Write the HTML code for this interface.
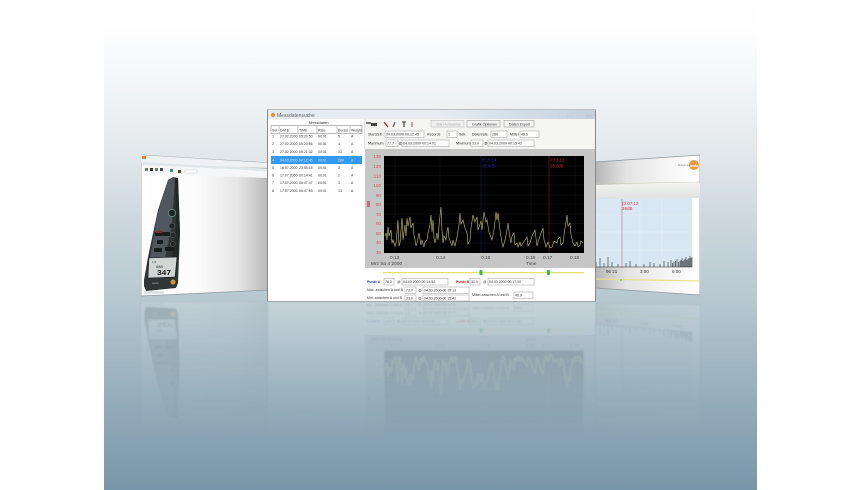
<!DOCTYPE html>
<html><head><meta charset="utf-8"><title>Messdatensuche</title>
<style>html,body{margin:0;padding:0;background:#fff;width:860px;height:490px;overflow:hidden}svg{display:block}text{font-family:"Liberation Sans",sans-serif}</style></head>
<body>
<svg width="860" height="490" viewBox="0 0 860 490" xmlns="http://www.w3.org/2000/svg">
<defs>
<linearGradient id="bg" x1="0" y1="0" x2="0" y2="1">
<stop offset="0" stop-color="#fff"/><stop offset=".07" stop-color="#fdfdfe"/><stop offset=".2" stop-color="#f0f3f5"/><stop offset=".33" stop-color="#e0e6e9"/><stop offset=".45" stop-color="#ccd8de"/><stop offset=".6" stop-color="#b8c9d1"/><stop offset=".75" stop-color="#9fb5c1"/><stop offset="1" stop-color="#7896a9"/>
</linearGradient>
<linearGradient id="lw" x1="141" x2="270" y1="0" y2="0" gradientUnits="userSpaceOnUse"><stop offset="0" stop-color="#fff"/><stop offset=".45" stop-color="#fbfbfb"/><stop offset=".75" stop-color="#e6e6e6"/><stop offset="1" stop-color="#b5b5b5"/></linearGradient>
<linearGradient id="rw" x1="595" x2="700" y1="0" y2="0" gradientUnits="userSpaceOnUse"><stop offset="0" stop-color="#b5b5b5"/><stop offset=".3" stop-color="#e4e4e4"/><stop offset=".7" stop-color="#f6f6f6"/><stop offset="1" stop-color="#fff"/></linearGradient>
<linearGradient id="rband" x1="0" x2="0" y1="0" y2="1"><stop offset="0" stop-color="#f2f2f0"/><stop offset="1" stop-color="#dfe2e2"/></linearGradient>
<linearGradient id="tb" x1="0" x2="1" y1="0" y2="0"><stop offset="0" stop-color="#e4ebf1"/><stop offset=".5" stop-color="#e8edf2"/><stop offset="1" stop-color="#c3d1dd"/></linearGradient>
<linearGradient id="fade" x1="0" x2="0" y1="296" y2="440" gradientUnits="userSpaceOnUse"><stop offset="0" stop-color="#fff" stop-opacity=".24"/><stop offset=".37" stop-color="#fff" stop-opacity=".12"/><stop offset=".65" stop-color="#fff" stop-opacity=".05"/><stop offset="1" stop-color="#fff" stop-opacity="0"/></linearGradient>
<mask id="rm" maskUnits="userSpaceOnUse" x="0" y="290" width="860" height="200"><rect x="0" y="290" width="860" height="200" fill="url(#fade)"/></mask>
<filter id="soft" x="0" y="0" width="100%" height="100%"><feGaussianBlur stdDeviation=".38"/></filter>
<filter id="soft2" x="-5%" y="-5%" width="110%" height="110%"><feGaussianBlur stdDeviation=".8"/></filter>

<g id="left">
<polygon points="141,155 270,163 270,290 141,296" fill="url(#lw)" stroke="#8d979c" stroke-width=".8"/>
<polygon points="141,155 270,163 270,168 141,162" fill="#eef2f5"/>
<rect x="142" y="156" width="4" height="3" fill="#d98b3a"/>
<polygon points="143,162 270,169 270,171 143,165" fill="#dfe6ea"/>
<polygon points="143,165 270,171 270,178 143,174" fill="#f4f6f7"/>
<g fill="#6d7b70"><rect x="145" y="168" width="3" height="3"/><rect x="150" y="168" width="3" height="3" fill="#333"/><rect x="155" y="168" width="3" height="3"/><rect x="160" y="168" width="3" height="3" fill="#445"/><rect x="170" y="169" width="3" height="3" fill="#3a8a7a"/><rect x="178" y="170" width="3" height="3" fill="#643"/><rect x="185" y="170" width="12" height="3" fill="#fff" stroke="#aaa" stroke-width=".3"/></g>
<polygon points="168,180 173,177 178,178 180,233 178,283 176,288 146,291 144,286 144,280 148,257 158,210" fill="#2f3436"/>
<polygon points="168,180 173,177 175,178 172,225 165,258 150,258 158,212" fill="#50575b"/>
<polygon points="175,179 178,178 180,233 178,258 172,258 176,225" fill="#232628"/>
<g fill="#191b1c"><rect x="155" y="232" width="8" height="4" rx="1"/><rect x="163" y="232" width="7" height="4" rx="1"/><rect x="157" y="240" width="6" height="4" rx="1"/><rect x="154" y="248" width="8" height="4" rx="1"/><rect x="165" y="247" width="9" height="4" rx="1"/></g>
<circle cx="172" cy="213" r="3.6" fill="#1d2224" stroke="#5f8a80" stroke-width="1"/>
<circle cx="172" cy="226" r="3" fill="#20262a" stroke="#777" stroke-width=".4"/>
<circle cx="173" cy="235" r="2.6" fill="#20262a" stroke="#777" stroke-width=".4"/>
<circle cx="173" cy="244" r="2.5" fill="#20262a" stroke="#777" stroke-width=".4"/>
<rect x="156" y="231" width="6" height="2" fill="#7a3037"/>
<polygon points="149,258 177,257 175,277 148,278" fill="#d0d6d4" stroke="#111" stroke-width=".5"/>
<text x="152" y="263" font-size="3" fill="#222">1.0</text><text x="156" y="268" font-size="4" fill="#222">088</text>
<text x="157" y="275" font-size="7.500" font-weight="bold" fill="#1a1a1a" textLength="14" lengthAdjust="spacingAndGlyphs">347</text>
<circle cx="173" cy="282" r="2.6" fill="#c9913c"/>
<text x="152" y="284" font-size="3" fill="#bbb">testo</text>
<rect x="144" y="291" width="20" height="3" fill="#dde3e6"/>
</g>

<g id="right">
<polygon points="595,162 700,155 700,295 595,288" fill="url(#rw)" stroke="#8d979c" stroke-width=".7"/>
<polygon points="595,185 700,183 700,198 595,199" fill="url(#rband)"/>
<path d="M595 184L700 182" stroke="#c8c8b8" stroke-width=".5"/>
<polygon points="595,199 692,198 692,267 595,267" fill="#d8e7f1"/>
<g stroke="#e7f0f6" stroke-width=".5"><path d="M595 215H692M595 232H692M595 250H692M640 198V267M662 198V267"/></g>
<path d="M622 199V268" stroke="#b07a85" stroke-width=".6"/>
<text x="622" y="205" font-size="4.5" fill="#d1394f">(0:07:13</text><text x="622" y="210" font-size="4.5" fill="#d1394f">26dB</text>
<path d="M596 267V262M600 267V258M604 267V263M608 267V257M612 267V262M618 267V264M626 267V263M630 267V261M636 267V264M644 267V264M650 267V262M654 267V263M660 267V264M664 267V261M668 267V262M671 267V260M672.500 267V263M674 267V262M675.500 267V261M677 267V259M678.500 267V262M680 267V261M681 267V260M682 267V258M683 267V261M684 267V260M685 267V259M686 267V257M687 267V260M688 267V259M689 267V258M690 267V256M691 267V258M692 267V257" stroke="#000" stroke-width=".5"/>
<path d="M595 267H692" stroke="#222" stroke-width=".6"/>
<text x="606" y="273" font-size="4.5" fill="#333">96 21</text><text x="640" y="273" font-size="4.5" fill="#333">3:00</text><text x="672" y="273" font-size="4.5" fill="#333">6:00</text>
<path d="M595 279L700 281" stroke="#e3e38e" stroke-width="1.2"/>
<circle cx="621" cy="280" r="1.1" fill="#8ec27f"/>
<circle cx="694" cy="165" r="5" fill="#ee9a3a"/>
<text x="690" y="167" font-size="3.5" font-weight="bold" fill="#fff">testo</text>
<text x="678" y="166" font-size="2.8" fill="#777">Dokument</text>
</g>

<g id="main">
<rect x="267.5" y="109.5" width="328" height="192" fill="#fff" stroke="#8b8b8b" stroke-width="1"/>
<rect x="268" y="110" width="327" height="9" fill="url(#tb)"/>
<circle cx="273" cy="115" r="2.2" fill="#e0963a"/>
<text x="277" y="117" font-size="5" fill="#666">Messdatensuche</text>
<rect x="567" y="114" width="8" height="4" fill="#c9d2da"/><rect x="576" y="114" width="8" height="4" fill="#c9d2da"/><rect x="585" y="114" width="8" height="4" fill="#c4cdd6"/>
<rect x="268" y="119" width="327" height="30" fill="#f5f5f4"/>
<rect x="268" y="119" width="96" height="182" fill="#fff"/>
<text x="309" y="124" font-size="4" fill="#333">Messdaten</text>
<rect x="271" y="125.500" width="91" height="8" fill="#fff" stroke="#777" stroke-width=".5"/>
<path d="M279 126V133M298 126V133M317 126V133M337 126V133M350 126V133" stroke="#888" stroke-width=".5"/>
<g font-size="3.500" fill="#333">
<text x="272" y="131.500">Set</text><text x="280" y="131.500">DATE</text><text x="299" y="131.500">TIME</text><text x="318" y="131.500">Rate</text><text x="338" y="131.500">Bursts</text><text x="351" y="131.500">Weight</text>
<text x="272" y="137.500">1</text><text x="280" y="137.500">27.02.2000</text><text x="299" y="137.500">05:20:50</text><text x="318" y="137.500">00:01</text><text x="338" y="137.500">5</text><text x="351" y="137.500">A</text>
<text x="272" y="145">2</text><text x="280" y="145">27.02.2000</text><text x="299" y="145">05:20:56</text><text x="318" y="145">00:01</text><text x="338" y="145">4</text><text x="351" y="145">A</text>
<text x="272" y="153">3</text><text x="280" y="153">27.02.2000</text><text x="299" y="153">05:21:32</text><text x="318" y="153">00:01</text><text x="338" y="153">13</text><text x="351" y="153">A</text>
</g>
<rect x="271" y="156" width="91" height="8" fill="#3399ee"/>
<g font-size="3.500" fill="#dff0ff"><text x="272" y="161.500">4</text><text x="280" y="161.500">04.03.2000</text><text x="299" y="161.500">00:12:45</text><text x="318" y="161.500">00:01</text><text x="338" y="161.500">280</text><text x="351" y="161.500">A</text></g>
<g font-size="3.500" fill="#333">
<text x="272" y="169">5</text><text x="280" y="169">16.07.2000</text><text x="299" y="169">23:55:16</text><text x="318" y="169">00:01</text><text x="338" y="169">3</text><text x="351" y="169">A</text>
<text x="272" y="176.500">6</text><text x="280" y="176.500">17.07.2000</text><text x="299" y="176.500">00:14:41</text><text x="318" y="176.500">00:01</text><text x="338" y="176.500">2</text><text x="351" y="176.500">A</text>
<text x="272" y="184">7</text><text x="280" y="184">17.07.2000</text><text x="299" y="184">06:47:47</text><text x="318" y="184">00:01</text><text x="338" y="184">3</text><text x="351" y="184">A</text>
<text x="272" y="192">8</text><text x="280" y="192">17.07.2000</text><text x="299" y="192">06:47:59</text><text x="318" y="192">00:01</text><text x="338" y="192">13</text><text x="351" y="192">A</text>
</g>
<path d="M364.500 119V149" stroke="#ccc" stroke-width=".5"/>
<rect x="366" y="122" width="5" height="2" fill="#777"/><rect x="371" y="123" width="6" height="3" fill="#444"/>
<path d="M384 122l4 5" stroke="#c22" stroke-width="1.4"/><path d="M393 127l2-5" stroke="#555" stroke-width="1.2"/><path d="M402 122h4M404 122v5" stroke="#333" stroke-width="1.1"/><path d="M412 122v5" stroke="#a66" stroke-width="1.1"/>
<g font-size="3.600" fill="#333">
<rect x="431" y="120.500" width="33" height="6.500" fill="#f0f0f0" stroke="#bbb" stroke-width=".6"/><text x="436" y="125.300" fill="#aaa">Start Aufnahme</text>
<rect x="467" y="120.500" width="33" height="6.500" fill="#f4f4f4" stroke="#999" stroke-width=".6"/><text x="472" y="125.300">Grafik Optionen</text>
<rect x="504" y="120.500" width="30" height="6.500" fill="#f4f4f4" stroke="#999" stroke-width=".6"/><text x="509" y="125.300">Daten Export</text>
<text x="368" y="135.500">StartZeit</text><rect x="385" y="131" width="39" height="6.500" fill="#fff" stroke="#999" stroke-width=".5"/><text x="386" y="135.600">04.03.2000 00:12:45</text>
<text x="427" y="135.500">Records</text><rect x="447" y="131" width="10" height="6.500" fill="#fff" stroke="#999" stroke-width=".5"/><text x="448" y="135.600">1</text>
<text x="459" y="135.500">Sek.</text><text x="472" y="135.500">Datenrate</text><rect x="491" y="131" width="16" height="6.500" fill="#fff" stroke="#999" stroke-width=".5"/><text x="492" y="135.600">280</text>
<text x="510" y="135.500">Mittel</text><rect x="520" y="131" width="19" height="6.500" fill="#fff" stroke="#999" stroke-width=".5"/><text x="521" y="135.600">46.9</text>
<text x="368" y="144.500">Maximum</text><rect x="386" y="140" width="12" height="6.500" fill="#fff" stroke="#999" stroke-width=".5"/><text x="387" y="144.600">77.7</text><text x="398.500" y="144.600">@</text><rect x="402" y="140" width="47" height="6.500" fill="#fff" stroke="#999" stroke-width=".5"/><text x="403" y="144.600">04.03.2000 00:14:01</text>
<text x="456" y="144.500">Minimum</text><rect x="471" y="140" width="12" height="6.500" fill="#fff" stroke="#999" stroke-width=".5"/><text x="472" y="144.600">33.0</text><text x="484" y="144.600">@</text><rect x="488" y="140" width="46" height="6.500" fill="#fff" stroke="#999" stroke-width=".5"/><text x="489" y="144.600">04.03.2000 00:15:42</text>
</g>
<rect x="365" y="149" width="230" height="119" fill="#c6c6c6"/>
<rect x="384" y="156" width="200" height="97" fill="#050505"/>
<g stroke="#1a1a1a" stroke-width=".5"><path d="M384 166H584M384 175.500H584M384 185H584M384 195H584M384 204H584M384 214H584M384 223.500H584M384 233H584M384 243H584M395 156V253M440 156V253M485 156V253M531 156V253M575 156V253"/></g>
<g font-size="4.600" fill="#c8565a" text-anchor="end">
<text x="381" y="158">130</text><text x="381" y="168">120</text><text x="381" y="177.500">110</text><text x="381" y="187">100</text><text x="381" y="197">90</text><text x="381" y="206">80</text><text x="381" y="216">70</text><text x="381" y="225">60</text><text x="381" y="235">50</text><text x="381" y="244">40</text><text x="381" y="254">30</text></g>
<rect x="367" y="201" width="3" height="6" fill="#d06a6a"/>
<path d="M481 156V253" stroke="#14147a" stroke-width=".6"/><path d="M549 156V253" stroke="#8a1515" stroke-width=".6"/>
<text x="482" y="161.500" font-size="4.300" fill="#22229a">0:15:14</text><text x="482" y="167.500" font-size="4.300" fill="#22229a">26.8dB</text>
<text x="550" y="161.500" font-size="4.300" fill="#c22">0:17:13</text><text x="550" y="167.500" font-size="4.300" fill="#c22">26.8dB</text>
<polyline fill="none" stroke="#c4c15a" stroke-width=".6" points="385,236 386,233 387,240 388,227 389,236 391,230 392,243 393,240 395,246 396,243 397,232 398,220 399,246 400,243 401,230 402,218 403,240 404,232 405,225 406,236 407,218 408,226 410,217 411,228 413,223 414,236 415,240 416,246 417,243 418,238 419,233 421,245 422,240 424,247 425,242 427,240 428,233 430,225 431,215 432,232 433,220 434,238 435,243 436,238 437,233 438,240 439,225 441,207 442,230 443,243 444,236 446,240 447,232 448,227 449,238 451,243 452,246 453,240 455,246 457,237 459,225 460,213 461,224 463,220 465,228 467,233 468,244 470,240 471,228 473,215 475,222 477,217 478,230 479,227 481,221 482,230 484,212 486,222 487,220 489,232 492,240 494,230 496,212 497,220 498,213 500,230 502,243 503,247 505,240 507,230 508,223 510,238 511,243 512,236 514,233 515,245 517,243 518,247 520,242 521,246 523,243 525,240 527,237 528,246 530,243 532,236 535,230 537,246 538,242 540,236 543,228 544,240 545,243 546,247 548,242 550,248 552,247 554,241 557,243 558,239 560,237 561,245 563,243 565,228 567,215 568,226 570,223 571,235 573,243 575,246 577,242 578,247 580,245 581,241 583,243"/>
<g font-size="4.800" fill="#444">
<text x="390" y="259">0.13</text><text x="436" y="259">0.14</text><text x="481" y="259">0.15</text><text x="526" y="259">0.16</text><text x="543" y="259">0.17</text><text x="570" y="259">0.18</text>
<text x="371" y="265">Mrz So 4 2000</text><text x="526" y="265">Time</text></g>
<path d="M383 272.700H584" stroke="#d8d83a" stroke-width="1"/>
<rect x="479.500" y="270" width="3" height="5" rx=".8" fill="#41b648"/><rect x="547" y="270" width="3" height="5" rx=".8" fill="#41b648"/>
<g font-size="3.500" fill="#333">
<text x="367" y="283" fill="#2a3aa8" font-weight="bold">Punkt A</text><rect x="384" y="278.500" width="10" height="6.500" fill="#fff" stroke="#999" stroke-width=".5"/><text x="385" y="283.200">76.3</text><text x="397" y="283.200">@</text><rect x="402" y="278.500" width="46" height="6.500" fill="#fff" stroke="#999" stroke-width=".5"/><text x="403" y="283.200">04.03.2000 00:14:54</text>
<text x="456" y="283" fill="#c22" font-weight="bold">Punkt B</text><rect x="470" y="278.500" width="10" height="6.500" fill="#fff" stroke="#999" stroke-width=".5"/><text x="471" y="283.200">30.9</text><text x="483" y="283.200">@</text><rect x="488" y="278.500" width="46" height="6.500" fill="#fff" stroke="#999" stroke-width=".5"/><text x="489" y="283.200">04.03.2000 00:17:00</text>
<text x="367" y="291">Max. zwischen A und B</text><rect x="405" y="287" width="11" height="6.500" fill="#fff" stroke="#999" stroke-width=".5"/><text x="406" y="291.600">72.7</text><text x="418" y="291.600">@</text><rect x="423" y="287" width="46" height="6.500" fill="#fff" stroke="#999" stroke-width=".5"/><text x="424" y="291.600">04.03.2000 00:15:13</text>
<text x="367" y="299">Min. zwischen A und B</text><rect x="405" y="295" width="11" height="6" fill="#fff" stroke="#999" stroke-width=".5"/><text x="406" y="299.400">33.0</text><text x="418" y="299.400">@</text><rect x="423" y="295" width="46" height="6" fill="#fff" stroke="#999" stroke-width=".5"/><text x="424" y="299.400">04.03.2000 00:15:42</text>
<text x="472" y="296">Mittel zwischen A und B</text><rect x="514" y="292" width="19" height="6.500" fill="#fff" stroke="#999" stroke-width=".5"/><text x="515" y="296.600">46.9</text>
</g>
</g>
</defs>

<rect x="0" y="0" width="860" height="490" fill="#fff"/>
<rect x="104" y="0" width="653" height="490" fill="url(#bg)"/>

<g mask="url(#rm)"><g filter="url(#soft2)">
<g opacity=".7"><use href="#left" transform="matrix(1 -.05 0 -1 0 605)"/>
<use href="#right" transform="matrix(1 .085 0 -1 0 540.300)"/></g>
<use href="#main" transform="matrix(1 0 0 -1 0 603)"/>
</g></g>

<g filter="url(#soft)">
<use href="#left"/>
<use href="#right"/>
<use href="#main"/>
</g>
</svg>
</body></html>
